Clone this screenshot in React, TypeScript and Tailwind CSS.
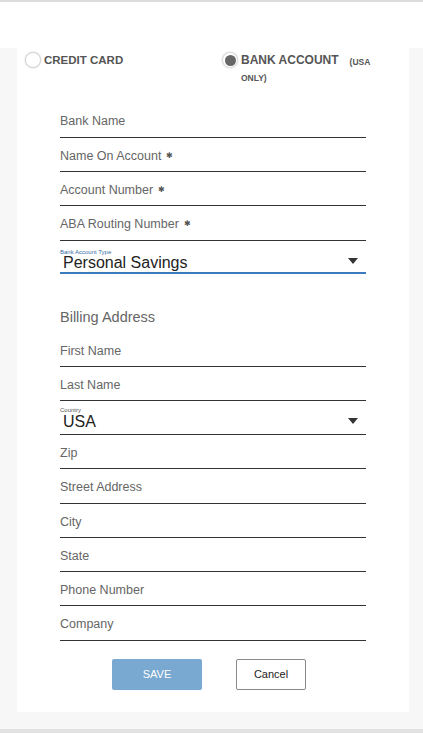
const font = { fontFamily: '"Liberation Sans", Arial, sans-serif' };

const Star = () => (
  <span className="ml-[5px] align-middle text-[8px] text-[#555]">✱</span>
);

interface FieldProps {
  label: string;
  required?: boolean;
  h?: string;
}

const Field = ({ label, required, h = 'h-[34.25px]' }: FieldProps) => (
  <div
    className={`${h} border-b border-[#333] pt-[10px] text-[12.5px] leading-[16px] text-[#666]`}
  >
    {label}
    {required && <Star />}
  </div>
);

const Caret = () => (
  <svg width="10" height="6" viewBox="0 0 10 6" className="mr-[8px] mb-[3px]">
    <path d="M0 0H10L5 6Z" fill="#333" />
  </svg>
);

interface SelectProps {
  label: string;
  value: string;
  focused?: boolean;
}

const SelectField = ({ label, value, focused }: SelectProps) => (
  <div
    className={
      focused
        ? 'h-[33px] border-b-2 border-[#3a7bbf] pt-[8px]'
        : 'h-[34px] border-b border-[#333] pt-[6px]'
    }
  >
    <div
      className={`text-[6px] leading-[6px] ${focused ? 'text-[#3a6ea8]' : 'text-[#555]'}`}
    >
      {label}
    </div>
    <div className="flex items-center justify-between">
      <span
        className={`pl-[3px] text-[16px] text-[#222] ${focused ? 'leading-[16px]' : 'leading-[18px]'}`}
      >
        {value}
      </span>
      <Caret />
    </div>
  </div>
);

export default function App() {
  return (
    <div
      className="flex min-h-[733px] flex-col border-t-2 border-[#dcdcdc] bg-[#f7f7f7]"
      style={font}
    >
      <div className="h-[46px] bg-white" />
      <div className="ml-[17px] mr-[14px] bg-white pb-[22px]">
        <div className="grid h-[36px] grid-cols-2 pt-[4px]">
          <label className="flex items-start pl-[8px]">
            <span className="h-[16px] w-[16px] rounded-full border border-[#d6d6d6] bg-white shadow-[0_0_2px_rgba(0,0,0,0.2)]" />
            <span className="ml-[3px] text-[11.5px] font-bold leading-[16px] text-[#555]">
              CREDIT CARD
            </span>
          </label>
          <label className="flex items-start pl-[9px]">
            <span className="flex h-[16px] w-[16px] shrink-0 items-center justify-center rounded-full border border-[#ddd] bg-white shadow-[0_0_2px_rgba(0,0,0,0.2)]">
              <span className="h-[11px] w-[11px] rounded-full bg-[#666]" />
            </span>
            <div className="ml-[3px] flex w-[140px] flex-wrap font-bold text-[#555]">
              <span className="text-[12px] leading-[16px]">BANK ACCOUNT</span>
              <span className="ml-[11px] pt-[2px] text-[8.5px] leading-[16px]">(USA</span>
              <span className="w-full text-[8.5px] leading-[16px]">ONLY)</span>
            </div>
          </label>
        </div>

        <div className="mx-[43px] mt-[19px]">
          <Field label="Bank Name" h="h-[34.5px]" />
          <Field label="Name On Account" required h="h-[34px]" />
          <Field label="Account Number" required h="h-[34px]" />
          <Field label="ABA Routing Number" required h="h-[35px]" />
          <SelectField label="Bank Account Type" value="Personal Savings" focused />

          <div className="pt-[35px] text-[14.5px] leading-[17px] text-[#666]">
            Billing Address
          </div>

          <div className="mt-[7px]">
            <Field label="First Name" />
            <Field label="Last Name" />
            <SelectField label="Country" value="USA" />
            <Field label="Zip" />
            <Field label="Street Address" />
            <Field label="City" />
            <Field label="State" />
            <Field label="Phone Number" />
            <Field label="Company" />
          </div>

          <div className="mt-[18px] flex gap-[34px] pl-[52px]">
            <button className="h-[31px] w-[90px] rounded-[2px] bg-[#79a8d0] text-[11px] text-white">
              SAVE
            </button>
            <button className="h-[31px] w-[70px] rounded-[2px] border border-[#8a8a8a] bg-white text-[11px] text-[#222]">
              Cancel
            </button>
          </div>
        </div>
      </div>
      <div className="flex-1" />
      <div className="h-[4px] bg-[#e2e2e2]" />
    </div>
  );
}
